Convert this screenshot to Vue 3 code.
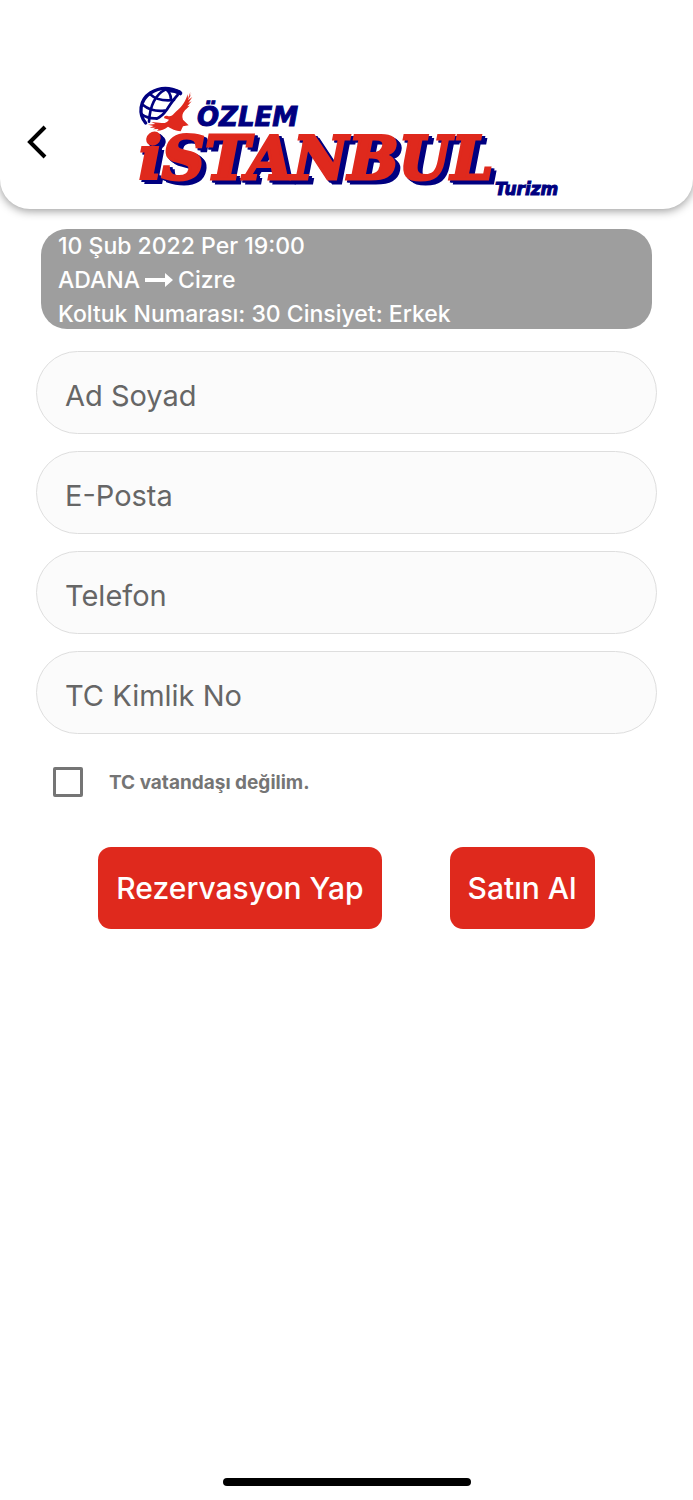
<script setup>
import { reactive, ref } from 'vue'

const fields = [
  { id: 'fullname', label: 'Ad Soyad', type: 'text' },
  { id: 'email', label: 'E-Posta', type: 'email' },
  { id: 'phone', label: 'Telefon', type: 'tel' },
  { id: 'identity', label: 'TC Kimlik No', type: 'text' },
]
const form = reactive({ fullname: '', email: '', phone: '', identity: '' })
const foreigner = ref(false)
</script>

<template>
  <div class="page">
    <header class="topbar">
      <button class="back" type="button" aria-label="Geri">
        <svg width="22" height="34" viewBox="0 0 22 34" aria-hidden="true">
          <path d="M19 2 4 17l15 15" fill="none" stroke="#000" stroke-width="4" />
        </svg>
      </button>
      <svg class="logo" viewBox="133 86 428 112" role="img" aria-label="Özlem İstanbul Turizm">
        <g transform="translate(125 75) scale(.3333)">
          <g fill="none" stroke="#000080" stroke-width="8" stroke-linecap="round">
            <path d="M62 144C40 118 43 76 76 54c28-18 60-17 88-3" stroke-width="10" />
            <path d="M122 43C94 57 75 90 72 140" />
            <path d="M158 60c-15 16-24 31-34 46-9 13-19 21-29 25" />
            <path d="M77 59c14 14 40 19 70 16M54 90c16 13 40 20 65 17M50 118c13 9 27 13 43 12" />
            <path d="M122 43c10 5 15 14 16 30" />
            <path d="M132 46c14 0 24 3 34 9" stroke-width="12" />
          </g>
          <path d="M199 54l-10 22 13-10-12 18 10-5-13 15 7-2-14 14c-8 9-10 17-6 28l17 17-17 3-7 15c-15-2-28-7-38-14-10 8-20 12-33 12l5-5-17 1 8-5-18 0 12-5-17-4 22-2-12-6 31 3c11 1 17-3 22-10l-14-4c-3-5 3-9 10-7 9 2 14-1 20-8 17-17 30-24 40-57l1 13 7-20-3 21z" fill="#df291d" stroke="#fff" stroke-width="3" paint-order="stroke" />
        </g>
        <text class="brand navy small" x="197" y="126">ÖZLEM</text>
        <text class="brand big" x="139" y="179">iSTANBUL</text>
        <text class="brand navy tiny" x="495" y="195">Turizm</text>
      </svg>
    </header>

    <main class="content">
      <section class="trip">
        <p>10 Şub 2022 Per 19:00</p>
        <p class="route">
          <span>ADANA</span>
          <svg width="28" height="16" viewBox="0 0 28 16" role="img" aria-label="→">
            <path d="M0 6h20V1l8 7-8 7v-5H0z" fill="#fff" />
          </svg>
          <span>Cizre</span>
        </p>
        <p>Koltuk Numarası: 30 Cinsiyet: Erkek</p>
      </section>

      <form class="form" @submit.prevent>
        <input
          v-for="field in fields"
          :id="field.id"
          :key="field.id"
          v-model="form[field.id]"
          class="field"
          :type="field.type"
          :placeholder="field.label"
          :aria-label="field.label"
        />
        <div class="check">
          <input id="foreigner" v-model="foreigner" type="checkbox" />
          <label for="foreigner">TC vatandaşı değilim.</label>
        </div>
        <div class="actions">
          <button type="button">Rezervasyon Yap</button>
          <button type="submit">Satın Al</button>
        </div>
      </form>
    </main>

    <div class="home-bar"></div>
  </div>
</template>

<style>
body {
  margin: 0;
  background: #fff;
}
</style>

<style scoped>
.page {
  display: flex;
  flex-direction: column;
  min-height: 100vh;
  overflow: hidden;
  font-family: Inter, "Noto Sans", sans-serif;
}

.topbar {
  display: grid;
  grid-template-columns: 1fr minmax(0, 428px) 1fr;
  align-items: center;
  padding: 74px 0 0;
  height: 135px;
  background: #fff;
  border-radius: 0 0 30px 30px;
  box-shadow: 0 2px 10px rgba(0, 0, 0, 0.4);
}

.back {
  justify-self: start;
  margin-left: 26px;
  padding: 0;
  border: 0;
  background: none;
}

.back svg,
.logo {
  display: block;
}

.logo {
  width: 100%;
  overflow: visible;
}

.brand {
  font-family: "DejaVu Sans", sans-serif;
  font-weight: 700;
  font-style: italic;
}

.navy {
  fill: #000080;
  stroke: #000080;
  stroke-width: 1px;
}

.small {
  font-size: 26px;
}

.tiny {
  font-size: 17px;
}

.big {
  font-family: "DejaVu Serif", serif;
  font-size: 60px;
  fill: #df291d;
  stroke: #df291d;
  stroke-width: 3px;
  filter: drop-shadow(3px 2px 0 #000080) drop-shadow(2px 2px 0 #000080);
}

.content {
  padding: 20px 36px 0;
}

.trip {
  height: 100px;
  margin: 0 5px;
  padding: 0 17px;
  border-radius: 26px;
  background: #9e9e9e;
  color: #fff;
  font-size: 23px;
  font-weight: 500;
  line-height: 34px;
}

.trip p {
  margin: 0;
}

.route {
  display: flex;
  align-items: center;
  gap: 5px;
}

.form {
  display: flex;
  flex-direction: column;
  gap: 17px;
  margin-top: 22px;
}

.field {
  box-sizing: border-box;
  width: 100%;
  height: 83px;
  padding: 5px 28px 0;
  border: 1px solid #dedede;
  border-radius: 42px;
  background: #fbfbfb;
  color: #222;
  font: 400 29px Inter, "Noto Sans", sans-serif;
}

.field::placeholder {
  color: #666;
  opacity: 1;
}

.check {
  display: flex;
  align-items: center;
  gap: 26px;
  margin: 16px 17px 0;
}

.check input {
  appearance: none;
  box-sizing: border-box;
  width: 30px;
  height: 30px;
  margin: 0;
  border: 3px solid #757575;
  border-radius: 2px;
}

.check input:checked {
  background: #757575;
}

.check label {
  color: #757575;
  font-size: 19px;
  font-weight: 700;
}

.actions {
  display: flex;
  justify-content: center;
  gap: 68px;
  margin-top: 33px;
}

.actions button {
  height: 82px;
  padding: 0 18px;
  border: 0;
  border-radius: 13px;
  background: #df291d;
  color: #fff;
  font: 500 30px Inter, "Noto Sans", sans-serif;
}

.home-bar {
  align-self: center;
  width: 248px;
  height: 8px;
  margin-top: auto;
  margin-bottom: 14px;
  border-radius: 4px;
  background: #000;
}
</style>
